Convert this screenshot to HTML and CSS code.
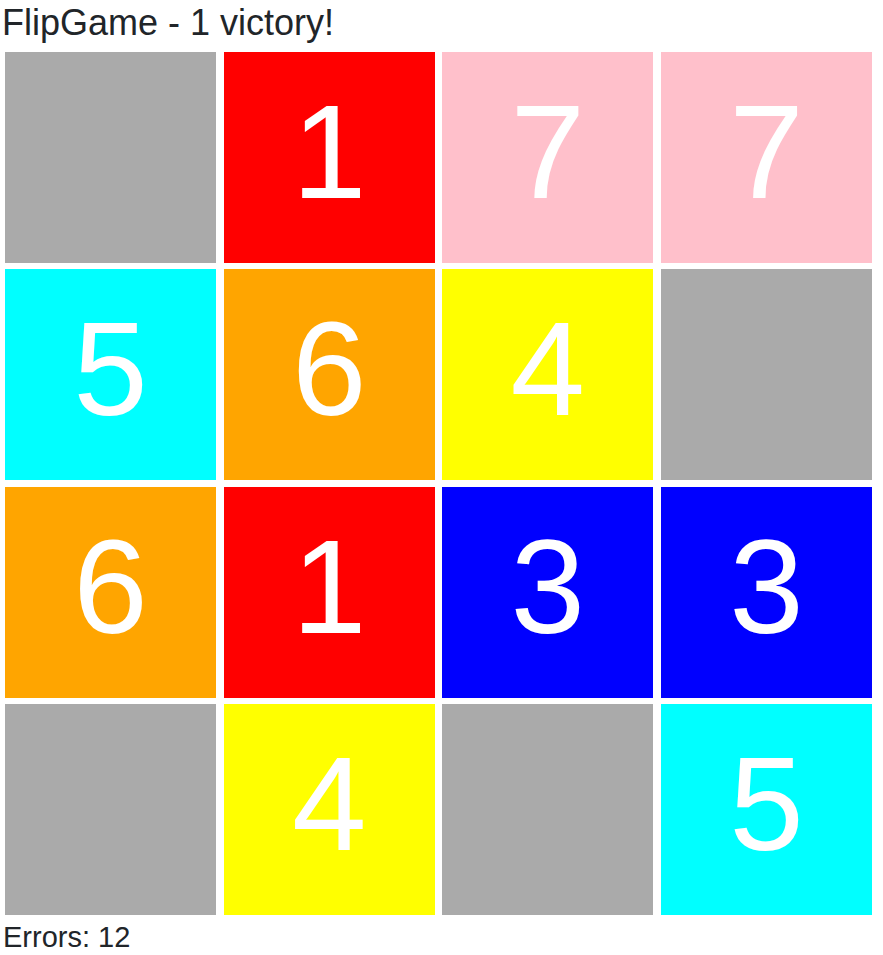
FILE: index.html
```html
<!DOCTYPE html>
<html>
<head>
<meta charset="utf-8">
<link rel="stylesheet" href="styles.css">
</head>
<body>
<div class="title">FlipGame - 1 victory!</div>
<div class="board">
  <div class="tile gray"></div>
  <div class="tile red">1</div>
  <div class="tile pink">7</div>
  <div class="tile pink">7</div>
  <div class="tile cyan">5</div>
  <div class="tile orange">6</div>
  <div class="tile yellow">4</div>
  <div class="tile gray"></div>
  <div class="tile orange">6</div>
  <div class="tile red">1</div>
  <div class="tile blue">3</div>
  <div class="tile blue">3</div>
  <div class="tile gray"></div>
  <div class="tile yellow">4</div>
  <div class="tile gray"></div>
  <div class="tile cyan">5</div>
</div>
<div class="errors">Errors: 12</div>
</body>
</html>
```
FILE: styles.css
```css
html, body {
  margin: 0;
  padding: 0;
  background: #fff;
}
body {
  font-family: "Liberation Sans", Arial, sans-serif;
  color: #212529;
  padding: 0 5px;
}
.title {
  font-size: 36px;
  line-height: 40px;
  padding-top: 3px;
  height: 49px;
  margin-left: -3px;
}
.board {
  display: grid;
  grid-template-columns: repeat(4, 211px);
  grid-auto-rows: 211px;
  column-gap: 7.67px;
  row-gap: 6.33px;
}
.tile {
  display: flex;
  align-items: center;
  justify-content: center;
  color: #fff;
  font-size: 134px;
  padding-bottom: 12px;
  box-sizing: border-box;
}
.gray { background: #aaaaaa; }
.red { background: #ff0000; }
.pink { background: #ffc0cb; }
.cyan { background: #00ffff; }
.orange { background: #ffa500; }
.yellow { background: #ffff00; }
.blue { background: #0000ff; }
.errors {
  font-size: 29px;
  line-height: 32px;
  padding-top: 6px;
  margin-left: -2px;
}
```
